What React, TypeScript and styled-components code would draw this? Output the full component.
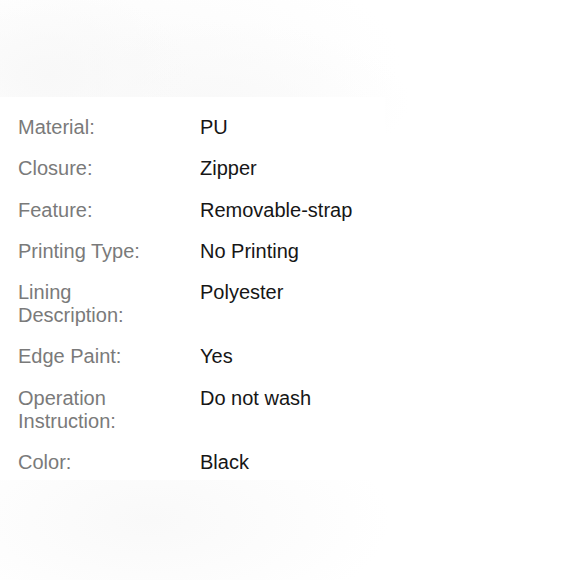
import styled, { createGlobalStyle } from "styled-components";

const GlobalStyle = createGlobalStyle`
  html, body {
    margin: 0;
    padding: 0;
    background: #ffffff;
  }
  body {
    font-family: "Liberation Sans", Arial, sans-serif;
  }
`;

const Page = styled.div`
  width: 580px;
  height: 580px;
  overflow: hidden;
  background:
    radial-gradient(ellipse 140px 90px at 50px 75px, #f8f8f8 0%, rgba(248, 248, 248, 0) 100%),
    radial-gradient(ellipse 200px 80px at 210px 100px, #f9f9f9 0%, rgba(249, 249, 249, 0) 100%),
    radial-gradient(ellipse 260px 110px at 140px 60px, #fbfbfb 0%, rgba(251, 251, 251, 0) 100%),
    radial-gradient(ellipse 240px 110px at 150px 520px, #f9f9f9 0%, rgba(249, 249, 249, 0) 100%),
    #ffffff;
  padding-top: 97px;
  box-sizing: border-box;
`;

const Panel = styled.section`
  width: 385px;
  height: 383px;
  box-sizing: border-box;
  background: #ffffff;
  padding: 19px 0 0 18px;
  display: flex;
  flex-direction: column;
  gap: 18.3px;
`;

const Row = styled.div`
  display: grid;
  grid-template-columns: 150px 1fr;
  column-gap: 32px;
  font-size: 20px;
  line-height: 23px;
`;

const Label = styled.div`
  color: #7a7a7a;
`;

const Value = styled.div`
  color: #161616;
`;

const specs = [
  { label: "Material:", value: "PU" },
  { label: "Closure:", value: "Zipper" },
  { label: "Feature:", value: "Removable-strap" },
  { label: "Printing Type:", value: "No Printing" },
  { label: "Lining Description:", value: "Polyester" },
  { label: "Edge Paint:", value: "Yes" },
  { label: "Operation Instruction:", value: "Do not wash" },
  { label: "Color:", value: "Black" },
];

export default function App() {
  return (
    <>
      <GlobalStyle />
      <Page>
        <Panel>
          {specs.map((s) => (
            <Row key={s.label}>
              <Label>{s.label}</Label>
              <Value>{s.value}</Value>
            </Row>
          ))}
        </Panel>
      </Page>
    </>
  );
}
